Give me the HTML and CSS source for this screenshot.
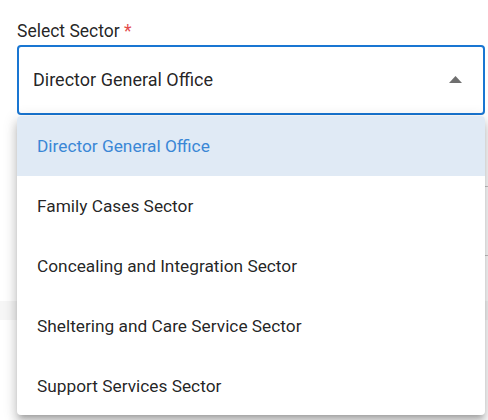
FILE: index.html
```html
<!DOCTYPE html>
<html>
<head>
<meta charset="utf-8">
<link rel="stylesheet" href="styles.css">
</head>
<body>
<div class="page">
  <div class="field">
    <label class="label">Select Sector <span class="req">*</span></label>
    <div class="select-wrap">
      <div class="select">
        <span class="value">Director General Office</span>
        <svg class="arrow" width="13" height="7" viewBox="0 0 13 7"><polygon points="0,7 6.5,0 13,7" fill="#6f6f6f"/></svg>
      </div>
      <ul class="menu">
        <li class="item selected">Director General Office</li>
        <li class="item">Family Cases Sector</li>
        <li class="item">Concealing and Integration Sector</li>
        <li class="item">Sheltering and Care Service Sector</li>
        <li class="item">Support Services Sector</li>
      </ul>
    </div>
  </div>
  <div class="bg">
    <div class="bg-line l1"></div>
    <div class="bg-line l2"></div>
    <div class="bg-band"></div>
  </div>
</div>
</body>
</html>
```
FILE: styles.css
```css
html, body {
  margin: 0;
  padding: 0;
  background: #fff;
  font-family: Roboto, "Noto Sans", Arial, sans-serif;
}
.page {
  width: 488px;
  height: 420px;
  overflow: hidden;
}
.field {
  padding: 21px 3px 0 17px;
}
.label {
  display: block;
  font-size: 17.5px;
  line-height: 21px;
  color: rgba(0, 0, 0, 0.87);
  margin-bottom: 3px;
}
.req {
  color: #e34b4b;
}
.select-wrap {
  position: relative;
  z-index: 2;
}
.select {
  box-sizing: border-box;
  height: 70px;
  border: 2px solid #1976d2;
  border-radius: 4px;
  display: flex;
  align-items: center;
  justify-content: space-between;
  padding: 0 21px 2px 14px;
}
.value {
  font-size: 18px;
  color: rgba(0, 0, 0, 0.87);
}
.arrow {
  display: block;
}
.menu {
  position: absolute;
  top: 71px;
  left: 0;
  right: 0;
  height: 299px;
  margin: 0;
  padding: 0;
  list-style: none;
  background: #fff;
  border-radius: 4px;
  overflow: hidden;
  box-shadow: 0 5px 5px -3px rgba(0,0,0,0.2), 0 8px 10px 1px rgba(0,0,0,0.14), 0 3px 14px 2px rgba(0,0,0,0.12);
}
.item {
  height: 60px;
  display: flex;
  align-items: center;
  padding-left: 20px;
  font-size: 17.3px;
  color: rgba(0, 0, 0, 0.87);
}
.item.selected {
  background: #e0eaf5;
  color: #3a87d6;
}
.bg {
  position: relative;
  z-index: 1;
}
.bg-line {
  height: 1px;
  background: #c4c4c4;
  margin-left: 17px;
}
.l1 {
  margin-top: 71px;
}
.l2 {
  margin-top: 68px;
}
.bg-band {
  margin-top: 45px;
  height: 19px;
  background: #f6f6f6;
}
```
